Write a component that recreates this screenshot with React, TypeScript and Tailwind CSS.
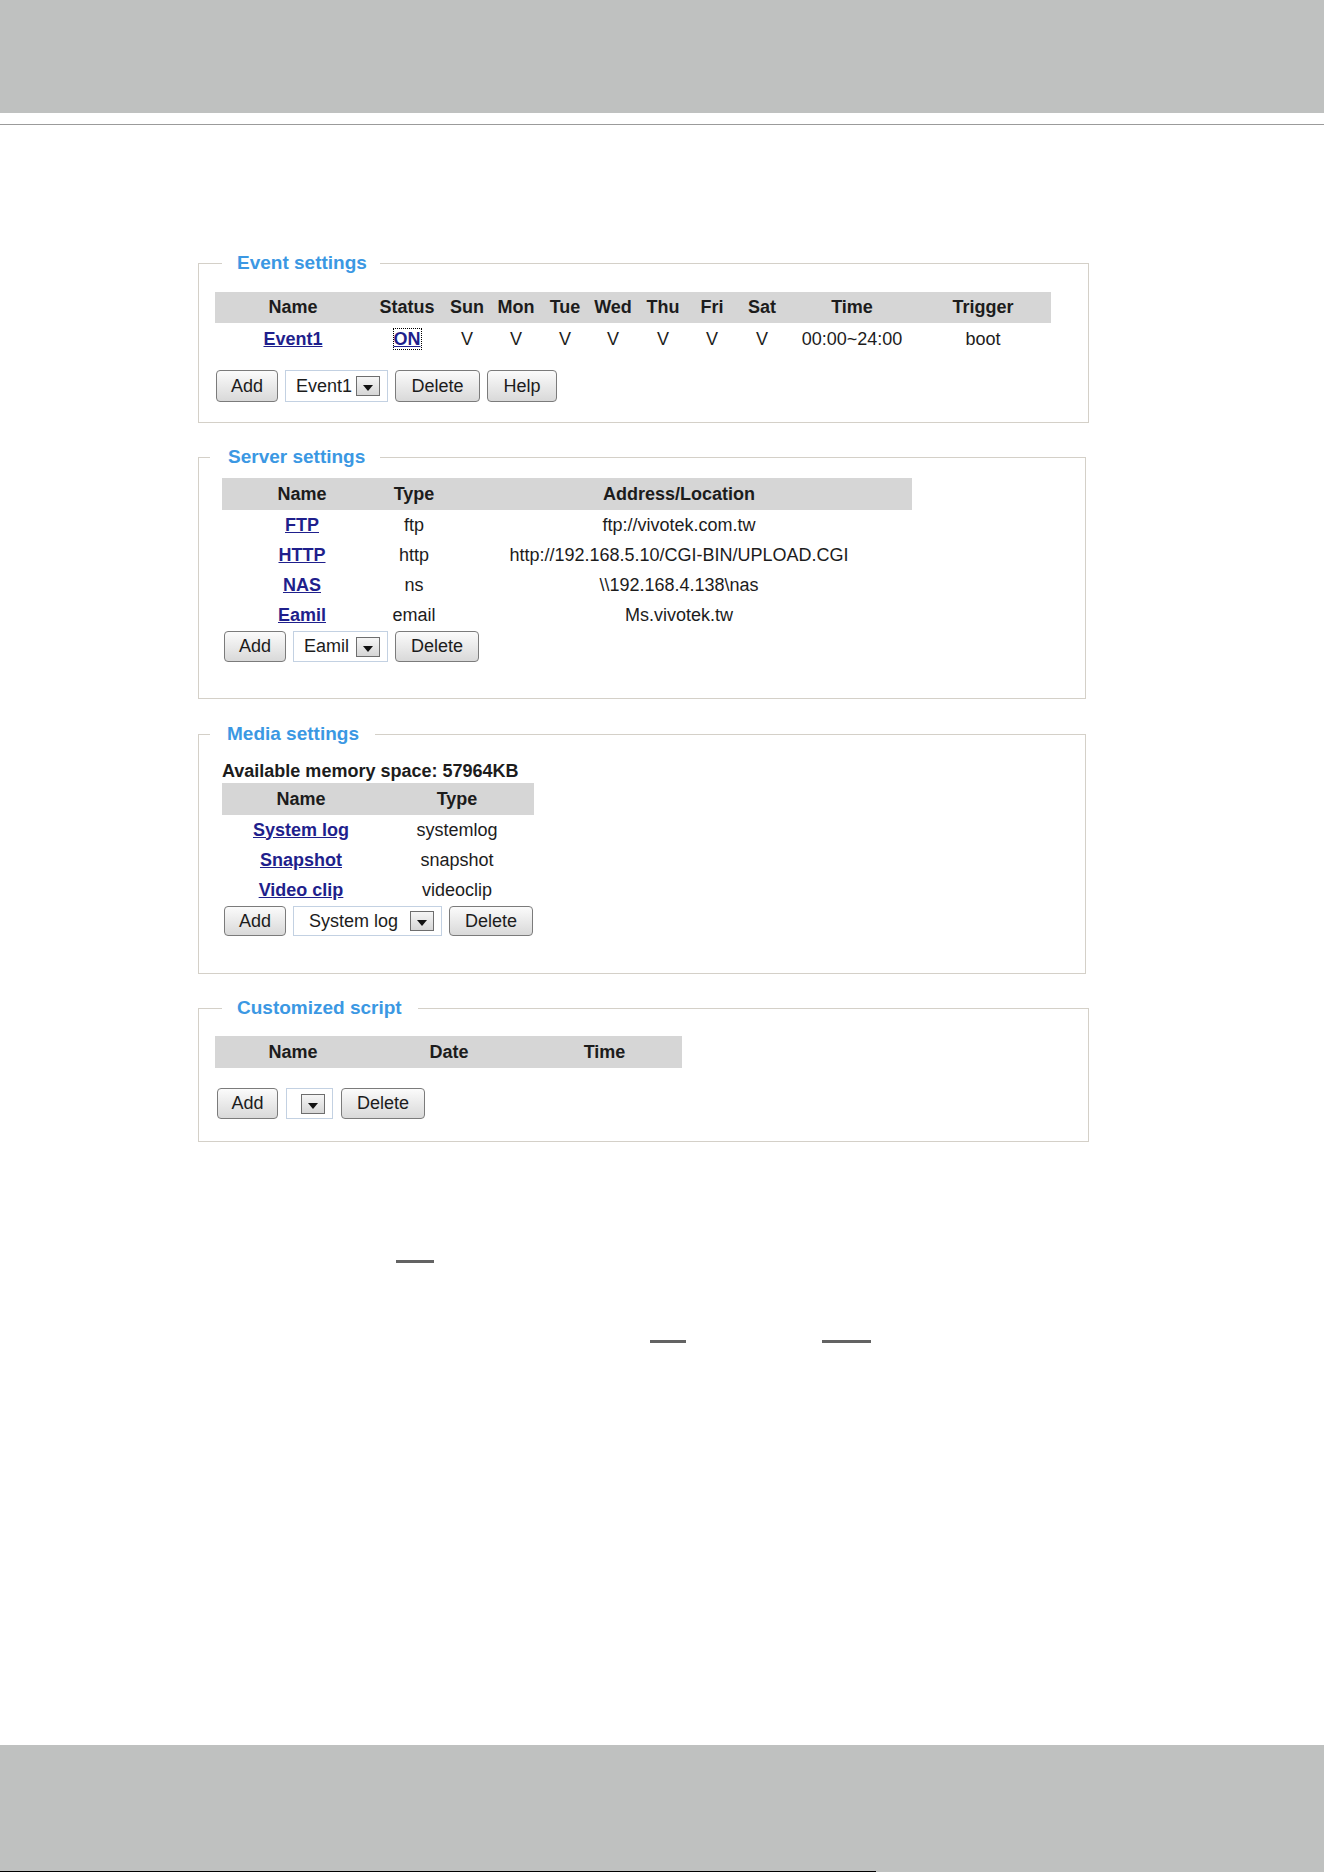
import type { ReactNode } from 'react'

const font = { fontFamily: '"Liberation Sans", Arial, sans-serif' }

const eventCols = 'grid grid-cols-[156px_72px_48px_50px_48px_48px_52px_46px_54px_126px_136px] items-center text-center'
const serverCols = 'grid grid-cols-[160px_64px_466px] items-center text-center'
const mediaCols = 'grid grid-cols-[158px_154px] items-center text-center'
const scriptCols = 'grid grid-cols-[156px_156px_155px] items-center text-center'

const days = ['Sun', 'Mon', 'Tue', 'Wed', 'Thu', 'Fri', 'Sat']

const servers = [
  { name: 'FTP', type: 'ftp', addr: 'ftp://vivotek.com.tw' },
  { name: 'HTTP', type: 'http', addr: 'http://192.168.5.10/CGI-BIN/UPLOAD.CGI' },
  { name: 'NAS', type: 'ns', addr: '\\\\192.168.4.138\\nas' },
  { name: 'Eamil', type: 'email', addr: 'Ms.vivotek.tw' },
]

const media = [
  { name: 'System log', type: 'systemlog' },
  { name: 'Snapshot', type: 'snapshot' },
  { name: 'Video clip', type: 'videoclip' },
]

function Link({ children, focused }: { children: ReactNode; focused?: boolean }) {
  return (
    <a
      href="#"
      className={
        focused
          ? 'font-bold text-[#1f1f8c] underline outline-1 outline-dotted outline-black'
          : 'font-bold text-[#1f1f8c] underline'
      }
    >
      {children}
    </a>
  )
}

function Btn({ label, className }: { label: string; className: string }) {
  return (
    <button
      type="button"
      className={`flex items-center justify-center rounded-[4px] border border-[#7b7b7b] bg-gradient-to-b from-[#fbfbfb] to-[#d9d9d9] text-[18px] text-[#1c1c1c] ${className}`}
    >
      {label}
    </button>
  )
}

function Select({ value, className }: { value: string; className: string }) {
  return (
    <div className={`flex items-center justify-between border border-[#c3d1e2] bg-white pr-[7px] text-[18px] text-[#1c1c1c] ${className}`}>
      <span>{value}</span>
      <span className="flex h-[20px] w-[24px] items-end justify-center border border-[#6e6e6e] bg-gradient-to-b from-[#f6f6f6] to-[#d6d6d6] pb-[4px]">
        <svg width="10" height="6" viewBox="0 0 10 6">
          <path d="M0 0h10L5 6z" fill="#111" />
        </svg>
      </span>
    </div>
  )
}

function Legend({ children, className }: { children: ReactNode; className: string }) {
  return <legend className={`text-[19px] font-bold leading-[22px] text-[#3b98e3] ${className}`}>{children}</legend>
}

export default function App() {
  return (
    <div className="flex min-h-[1872px] flex-col bg-white text-[18px] text-[#1c1c1c]" style={font}>
      <div className="h-[113px] bg-[#bfc1c0]" />
      <div className="mt-[11px] h-px bg-[#9b9b9b]" />

      <div className="pl-[198px]">
        {/* Event settings */}
        <fieldset className="mt-[127px] w-[891px] border border-[#d4d0c8] pb-[20px]">
          <Legend className="ml-[23px] pl-[15px] pr-[13px]">Event settings</Legend>
          <div className="pl-[16px] pt-[18px]">
            <div className={`${eventCols} h-[31px] w-[836px] bg-[#d6d6d6] font-bold`}>
              <span>Name</span>
              <span>Status</span>
              {days.map((d) => (
                <span key={d}>{d}</span>
              ))}
              <span>Time</span>
              <span>Trigger</span>
            </div>
            <div className={`${eventCols} h-[32px] w-[836px]`}>
              <span>
                <Link>Event1</Link>
              </span>
              <span>
                <Link focused>ON</Link>
              </span>
              {days.map((d) => (
                <span key={d}>V</span>
              ))}
              <span>00:00~24:00</span>
              <span>boot</span>
            </div>
            <div className="ml-[1px] mt-[15px] flex gap-[7px]">
              <Btn label="Add" className="h-[32px] w-[62px]" />
              <Select value="Event1" className="h-[32px] w-[103px] pl-[10px]" />
              <Btn label="Delete" className="h-[32px] w-[85px]" />
              <Btn label="Help" className="h-[32px] w-[70px]" />
            </div>
          </div>
        </fieldset>

        {/* Server settings */}
        <fieldset className="mt-[23px] w-[888px] border border-[#d4d0c8] pb-[36px]">
          <Legend className="ml-[11px] pl-[18px] pr-[15px]">Server settings</Legend>
          <div className="pl-[23px] pt-[10px]">
            <div className={`${serverCols} h-[32px] w-[690px] bg-[#d6d6d6] font-bold`}>
              <span>Name</span>
              <span>Type</span>
              <span>Address/Location</span>
            </div>
            {servers.map((s) => (
              <div key={s.name} className={`${serverCols} h-[30px] w-[690px]`}>
                <span>
                  <Link>{s.name}</Link>
                </span>
                <span>{s.type}</span>
                <span>{s.addr}</span>
              </div>
            ))}
            <div className="ml-[2px] mt-[1px] flex gap-[7px]">
              <Btn label="Add" className="h-[31px] w-[62px]" />
              <Select value="Eamil" className="h-[31px] w-[95px] pl-[10px]" />
              <Btn label="Delete" className="h-[31px] w-[84px]" />
            </div>
          </div>
        </fieldset>

        {/* Media settings */}
        <fieldset className="mt-[24px] w-[888px] border border-[#d4d0c8] pb-[37px]">
          <Legend className="ml-[11px] pl-[17px] pr-[16px]">Media settings</Legend>
          <div className="pl-[23px] pt-[15px]">
            <div className="font-bold leading-[22px]">Available memory space: 57964KB</div>
            <div className={`${mediaCols} mt-[1px] h-[32px] w-[312px] bg-[#d6d6d6] font-bold`}>
              <span>Name</span>
              <span>Type</span>
            </div>
            {media.map((m) => (
              <div key={m.name} className={`${mediaCols} h-[30px] w-[312px]`}>
                <span>
                  <Link>{m.name}</Link>
                </span>
                <span>{m.type}</span>
              </div>
            ))}
            <div className="ml-[2px] mt-[1px] flex gap-[7px]">
              <Btn label="Add" className="h-[30px] w-[62px]" />
              <Select value="System log" className="h-[30px] w-[149px] pl-[15px]" />
              <Btn label="Delete" className="h-[30px] w-[84px]" />
            </div>
          </div>
        </fieldset>

        {/* Customized script */}
        <fieldset className="mt-[23px] w-[891px] border border-[#d4d0c8] pb-[22px]">
          <Legend className="ml-[23px] pl-[15px] pr-[16px]">Customized script</Legend>
          <div className="pl-[16px] pt-[17px]">
            <div className={`${scriptCols} h-[32px] w-[467px] bg-[#d6d6d6] font-bold`}>
              <span>Name</span>
              <span>Date</span>
              <span>Time</span>
            </div>
            <div className="ml-[2px] mt-[20px] flex gap-[8px]">
              <Btn label="Add" className="h-[31px] w-[61px]" />
              <Select value="" className="h-[31px] w-[47px] pl-[10px]" />
              <Btn label="Delete" className="h-[31px] w-[84px]" />
            </div>
          </div>
        </fieldset>
      </div>

      {/* underline marks */}
      <div className="ml-[396px] mt-[118px] h-[3px] w-[38px] bg-[#636363]" />
      <div className="mt-[77px] flex">
        <div className="ml-[650px] h-[3px] w-[36px] bg-[#636363]" />
        <div className="ml-[136px] h-[3px] w-[49px] bg-[#636363]" />
      </div>

      <div className="mt-auto flex h-[127px] flex-col justify-end bg-[#bfc1c0]">
        <div className="h-px w-[876px] bg-black" />
      </div>
    </div>
  )
}
